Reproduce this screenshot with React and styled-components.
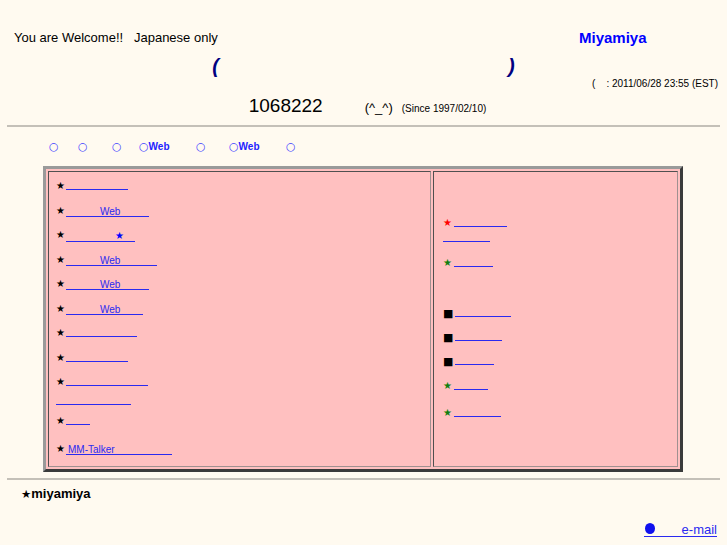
import React from "react";
import styled, { createGlobalStyle } from "styled-components";

const Global = createGlobalStyle`
  html, body { margin: 0; padding: 0; background: #fffaf0; }
  body { font-family: "Liberation Sans", Arial, sans-serif; color: #000; }
`;

const Page = styled.div`
  padding: 30px 7px 0 7px;
  width: 713px;
`;

const TopRow = styled.div`
  display: grid;
  grid-template-columns: 565px 1fr;
  padding-left: 7px;
  line-height: 16px;
`;

const Welcome = styled.div`
  font-size: 13px;
  white-space: pre;
`;

const Brand = styled.div`
  font-size: 15px;
  font-weight: bold;
  color: #0000ff;
`;

const TitleRow = styled.div`
  display: flex;
  justify-content: center;
  margin-top: 9px;
  line-height: 22px;
  font-size: 20px;
  font-weight: bold;
  font-style: italic;
  color: #000080;
`;

const Blank = styled.span`
  display: inline-block;
  width: ${(p) => p.$w}px;
`;

const DateRow = styled.div`
  margin-top: 1px;
  text-align: right;
  padding-right: 2px;
  font-size: 10px;
  line-height: 12px;
  white-space: pre;
`;

const CounterRow = styled.div`
  margin-top: 5px;
  display: flex;
  justify-content: center;
  align-items: baseline;
  padding-left: 8px;
  line-height: 22px;
`;

const Count = styled.span`
  font-size: 19px;
`;

const Face = styled.span`
  font-size: 13px;
`;

const Since = styled.span`
  font-size: 10px;
`;

const Rule = styled.div`
  height: 2px;
  background: #c4c0b8;
  margin-top: ${(p) => p.$top}px;
`;

const Nav = styled.div`
  display: flex;
  margin-top: 13px;
  padding-left: 42px;
  line-height: 14px;
  height: 14px;
`;

const NavItem = styled.a`
  display: inline-flex;
  align-items: baseline;
  width: ${(p) => (p.$w ? `${p.$w}px` : "auto")};
  color: #2222ff;
  text-decoration: none;
  font-size: 10px;
  font-weight: bold;
`;

const Ring = styled.span`
  font-family: "DejaVu Sans", sans-serif;
  font-weight: normal;
  font-size: 11px;
  color: #4444ff;
`;

const Board = styled.div`
  margin: 12px 0 0 36px;
  width: 630px;
  display: grid;
  grid-template-columns: 383px 1fr;
  gap: 2px;
  padding: 2px;
  background: #ffc0c0;
  border: 3px solid;
  border-color: #9a9a9a #3a3a3a #3a3a3a #9a9a9a;
`;

const Cell = styled.div`
  display: flex;
  flex-direction: column;
  justify-content: center;
  background: #ffc0c0;
  border: 1px solid;
  border-color: #505050 #a09090 #a09090 #505050;
  padding: 5px ${(p) => p.$right}px 7px ${(p) => p.$left}px;
  font-size: 10px;
`;

const Item = styled.div`
  line-height: ${(p) => p.$lh}px;
  margin-top: ${(p) => p.$top}px;
  &:first-child { margin-top: 0; }
  white-space: nowrap;
`;

const Mark = styled.span`
  font-family: "DejaVu Sans", sans-serif;
  font-size: ${(p) => p.$size}px;
  line-height: 1;
  vertical-align: ${(p) => p.$lift || 0}px;
  color: ${(p) => p.$color};
  margin-right: ${(p) => p.$gap}px;
`;

const Link = styled.a`
  display: inline-block;
  box-sizing: border-box;
  width: ${(p) => p.$w}px;
  padding-left: ${(p) => p.$pad || 0}px;
  line-height: 9px;
  border-bottom: 1px solid #2a2af0;
  color: #2a2af0;
  text-decoration: none;
  font-size: 10px;
  white-space: nowrap;
`;

const Footer = styled.div`
  margin-top: 6px;
  padding-left: 14px;
  line-height: 16px;
  font-size: 13px;
  font-weight: bold;
  display: flex;
  align-items: baseline;
`;

const MailRow = styled.div`
  margin-top: 21px;
  display: flex;
  justify-content: flex-end;
  padding-right: 3px;
  line-height: 16px;
`;

const MailLink = styled.a`
  display: inline-flex;
  align-items: baseline;
  gap: 27px;
  padding-left: 1px;
  font-size: 13px;
  line-height: 13px;
  color: #2a2af0;
  text-decoration: none;
  border-bottom: 1px solid #2a2af0;
`;

const Dot = styled.span`
  display: inline-block;
  width: 10px;
  height: 11px;
  border-radius: 50%;
  background: #1010ee;
`;

const leftItems = [
  { w: 62 },
  { w: 83, pad: 34, text: "Web" },
  { w: 69, pad: 49, star: true },
  { w: 91, pad: 34, text: "Web" },
  { w: 83, pad: 34, text: "Web" },
  { w: 77, pad: 34, text: "Web" },
  { w: 71 },
  { w: 62 },
  { w: 82, second: 75 },
  { w: 24, top: 1 },
  { w: 106, pad: 2, text: "MM-Talker", top: 9 },
];

const rightItems = [
  { mark: "★", color: "#ff0000", w: 53, second: 47, top: 0 },
  { mark: "★", color: "#108010", w: 39, top: 10 },
  { mark: "■", color: "#000", w: 56, top: 35, square: true },
  { mark: "■", color: "#000", w: 47, top: 9, square: true },
  { mark: "■", color: "#000", w: 39, top: 9, square: true },
  { mark: "★", color: "#108010", w: 34, top: 10 },
  { mark: "★", color: "#108010", w: 47, top: 12 },
];

const navItems = [
  { w: 29 },
  { w: 34 },
  { w: 27 },
  { w: 57, text: "Web" },
  { w: 33 },
  { w: 57, text: "Web" },
  {},
];

export default function App() {
  return (
    <>
      <Global />
      <Page>
        <TopRow>
          <Welcome>{"You are Welcome!!   Japanese only"}</Welcome>
          <Brand>Miyamiya</Brand>
        </TopRow>
        <TitleRow>
          <span>(</span>
          <Blank $w={289} />
          <span>)</span>
        </TitleRow>
        <DateRow>
          {"("}
          <Blank $w={11} />
          {": 2011/06/28 23:55 (EST)"}
        </DateRow>
        <CounterRow>
          <Count>1068222</Count>
          <Blank $w={42} />
          <Face>(^_^)</Face>
          <Blank $w={9} />
          <Since>(Since 1997/02/10)</Since>
        </CounterRow>
        <Rule $top={5} />
        <Nav>
          {navItems.map((n, i) => (
            <NavItem key={i} href="#" $w={n.w}>
              <Ring>○</Ring>
              {n.text}
            </NavItem>
          ))}
        </Nav>
        <Board>
          <Cell $left={7} $right={7}>
            {leftItems.map((it, i) => (
              <Item key={i} $lh={19} $top={it.top ?? 5.5}>
                <Mark $size={10} $color="#000" $gap={1} $lift={1}>★</Mark>
                <Link href="#" $w={it.w} $pad={it.pad}>
                  {it.star ? <Mark $size={10} $color="#0000ff" $gap={0}>★</Mark> : it.text}
                </Link>
                {it.second && (
                  <>
                    <br />
                    <Link href="#" $w={it.second} />
                  </>
                )}
              </Item>
            ))}
          </Cell>
          <Cell $left={9} $right={9}>
            {rightItems.map((it, i) => (
              <Item key={i} $lh={15} $top={it.top}>
                <Mark
                  $size={it.square ? 11 : 10}
                  $color={it.color}
                  $gap={it.square ? 2 : 2.5}
                  $lift={it.square ? 0 : 1}
                >
                  {it.mark}
                </Mark>
                <Link href="#" $w={it.w} />
                {it.second && (
                  <>
                    <br />
                    <Link href="#" $w={it.second} />
                  </>
                )}
              </Item>
            ))}
          </Cell>
        </Board>
        <Rule $top={6} />
        <Footer>
          <Mark $size={11.5} $color="#000" $gap={0}>★</Mark>
          miyamiya
        </Footer>
        <MailRow>
          <MailLink href="#">
            <Dot />
            e-mail
          </MailLink>
        </MailRow>
      </Page>
    </>
  );
}
